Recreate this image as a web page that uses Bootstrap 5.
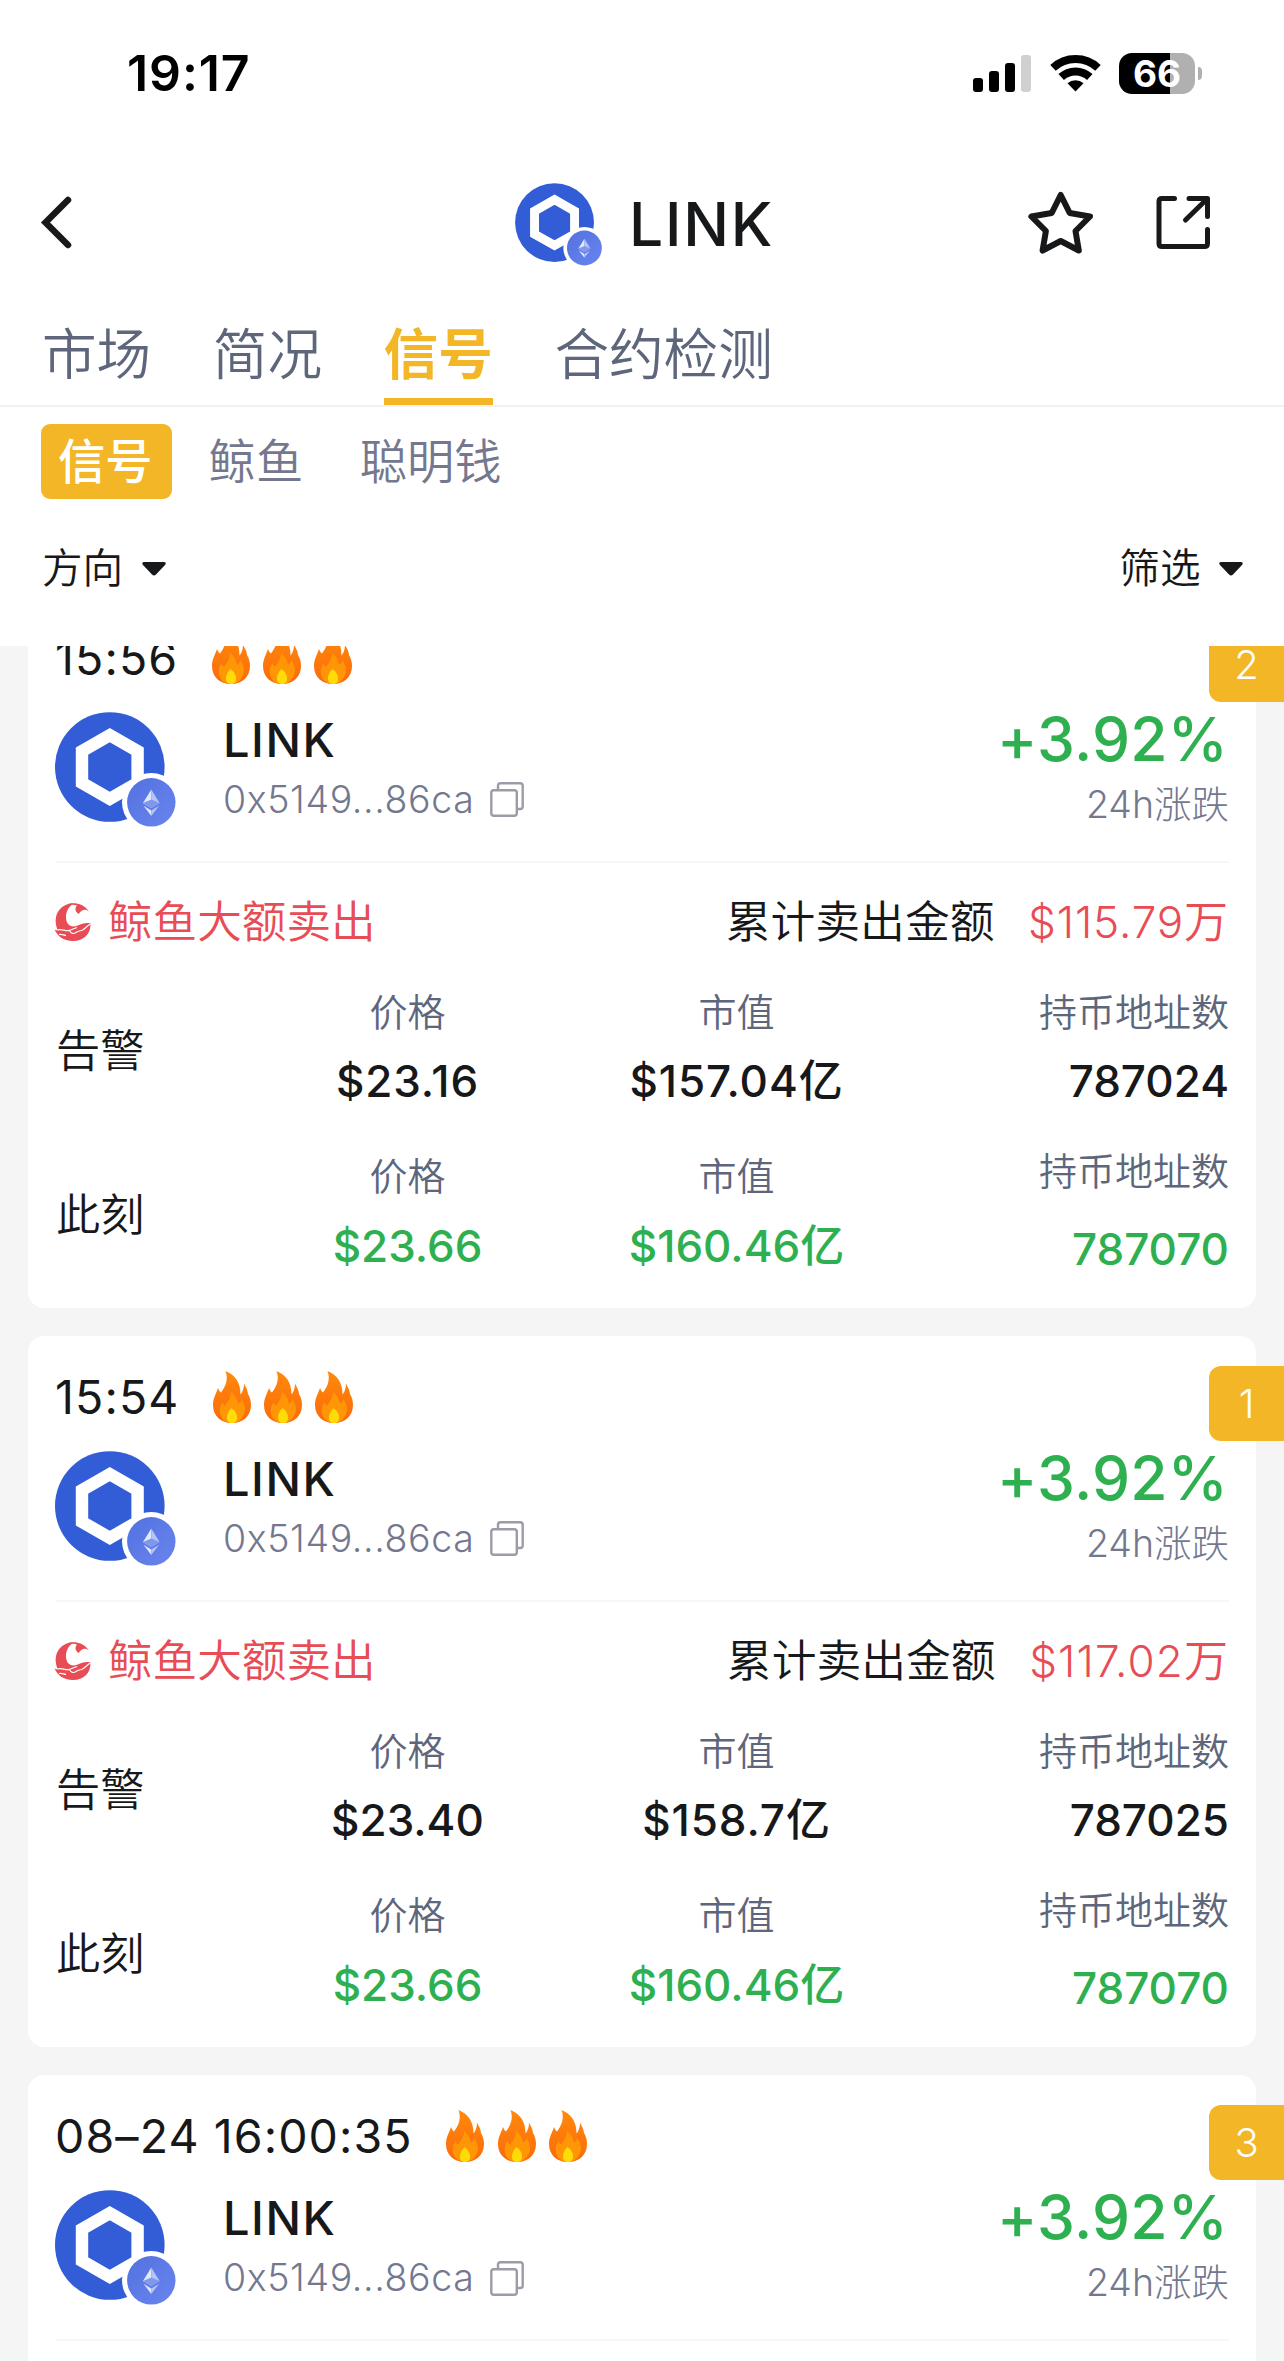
<!DOCTYPE html>
<html lang="zh-CN">
<head>
<meta charset="utf-8">
<meta name="viewport" content="width=device-width, initial-scale=1">
<title>LINK</title>
<link href="https://cdn.jsdelivr.net/npm/bootstrap@5.3.0/dist/css/bootstrap.min.css" rel="stylesheet">
<style>
  :root { --ink: #17181a; --slate: #5d667b; --mute: #74788f; --gold: #f2b626; --up: #2fb050; --down: #e84c55; }
  body { font-family: Inter, "Noto Sans CJK SC", sans-serif; font-weight: 350; line-height: 1; color: var(--ink); background: #fff; }
  .screen { width: 1284px; height: 2361px; overflow: hidden; }
  svg { display: block; flex: none; }
  .text-slate { color: var(--slate); }
  .text-mute { color: var(--mute); }
  .text-up { color: var(--up); }
  .text-down { color: var(--down); }

  .status-bar { height: 146px; padding: 0 82px 0 127px; color: #000; }
  .clock { font-size: 50px; font-weight: 600; letter-spacing: .9px; }
  .battery { width: 76px; height: 41px; border-radius: 13px; background: linear-gradient(90deg, #000 67%, #b0b0b0 67%); color: #fff; font-size: 37px; font-weight: 700; }
  .battery-tip { width: 4px; height: 13px; border-radius: 0 5px 5px 0; background: #b0b0b0; margin-left: 3px; }
  .wifi { margin: 0 18px 0 19px; }

  .title-bar { height: 153px; padding: 0 73px 0 40px; }
  .title-token { gap: 18px; margin-left: 182px; }
  .title-name { font-size: 60.5px; font-weight: 500; letter-spacing: 1.8px; line-height: 62px; padding-top: 2px; }
  .title-actions { gap: 61px; }

  .main-tabs { height: 108px; padding-left: 42px; gap: 61.6px; border-bottom: 2px solid #f1f1f2; }
  .main-tabs .nav-link { padding: 12px 0 0; height: 106px; line-height: 87px; font-size: 54.6px; color: var(--slate); }
  .main-tabs .nav-link.active { color: var(--gold); font-weight: 600; border-bottom: 7px solid var(--gold); }
  .sub-tabs { padding: 17px 41px 0; }
  .sub-tabs .nav-link { padding: 0; line-height: 75px; font-size: 47.3px; color: var(--mute); margin-right: 56.5px; }
  .sub-tabs .nav-link.active { background: var(--gold); color: #fff; font-weight: 500; padding: 0 19px 0 17px; border-radius: 9px; margin-right: 37px; }
  .filters { height: 147px; padding: 0 41px 7px 42px; font-size: 40.6px; }
  .filters > div { gap: 18.5px; }

  .feed { height: 1715px; background: #f5f5f5; padding: 0 28px; }
  .feed-list { gap: 28px; margin-top: -49px; }
  .signal-card { height: 711px; flex: none; border: 0; border-radius: 16px; padding: 30px 27px 0 28px; color: var(--ink); }
  .signal-time { height: 62px; font-size: 46.5px; font-weight: 400; letter-spacing: 1.1px; gap: 33.5px; margin-left: -1px; }
  .flames { gap: 13.3px; }
  .token-row { height: 174px; padding-top: 23px; border-bottom: 2px solid #f6f6f7; }
  .token-row .avatar { margin-left: -1px; margin-right: 46px; }
  .token-name { font-size: 47px; font-weight: 500; letter-spacing: 1.5px; line-height: 55px; }
  .token-addr { font-size: 37.5px; font-weight: 300; letter-spacing: .6px; line-height: 66px; gap: 16px; }
  .change { font-size: 60.5px; font-weight: 500; letter-spacing: .2px; line-height: 54px; margin-right: 1px; }
  .change-label { font-size: 37.5px; font-weight: 300; line-height: 78px; }
  .signal-row { height: 118px; font-size: 44.8px; padding-top: 1px; }
  .signal-row .event { gap: 17px; margin-left: -2px; font-size: 44.6px; }
  .signal-row .total { gap: 33.5px; }
  .amount { font-size: 44px; font-weight: 350; letter-spacing: .9px; }
  .wide { letter-spacing: 1.1px; }

  .metric-row { height: 164px; }
  .metric-head { width: 187px; font-size: 44.2px; line-height: 141px; }
  .metric-row.now .metric-head { line-height: 142px; }
  .metric { width: 329px; text-align: center; }
  .metric.last { width: auto; flex: 1; text-align: right; }
  .metric dt { font-size: 38px; font-weight: 350; line-height: 62px; color: var(--slate); }
  .metric dd { font-size: 44px; font-weight: 500; letter-spacing: .9px; line-height: 77px; margin: 0; }
  .metric-row.now dt { line-height: 64px; }
  .metric dd.tight { letter-spacing: 0; }
  .metric.last dd { letter-spacing: 0; }
  .metric-row.now .metric.shifted dt { line-height: 55px; }
  .metric.shifted dd { line-height: 101px; }
  .rank { right: -28px; top: 30px; width: 75px; height: 75px; border-radius: 12px 0 0 12px; background: var(--gold); color: #fff; font-size: 40px; font-weight: 300; }
</style>
<script src="https://cdn.jsdelivr.net/npm/bootstrap@5.3.0/dist/js/bootstrap.bundle.min.js"></script>
</head>
<body>
<svg width="0" height="0" class="position-absolute">
  <defs>
    <linearGradient id="flameFill" x1="0" y1="0" x2="0" y2="1"><stop offset="0" stop-color="#ff8a0c"/><stop offset="1" stop-color="#fb6a0a"/></linearGradient>
    <linearGradient id="ethFill" x1="0" y1="0" x2="1" y2="1"><stop offset="0" stop-color="#5272e0"/><stop offset="1" stop-color="#6a84ee"/></linearGradient>
  </defs>
  <symbol id="logo" viewBox="0 0 122 116">
    <circle cx="54.8" cy="55" r="54.8" fill="#325dd6"/>
    <path d="M54.8 23.2 82.6 39V71L54.8 86.8 27 71V39Z" fill="none" stroke="#fff" stroke-width="12.4"/>
    <circle cx="96.3" cy="90.3" r="29.3" fill="#fff"/>
    <circle cx="96.3" cy="90.3" r="24.2" fill="url(#ethFill)"/>
    <path d="M96.3 77.5 88 91l8.3 5Z" fill="#dfe8fd"/><path d="M96.3 77.5 104.600 91l-8.3 5Z" fill="#b3c4f8"/>
    <path d="M88 91l8.300-3.500 8.300 3.500-8.300 5Z" fill="#7f98ec"/>
    <path d="M88.500 93.700l7.800 4.800v5.500Z" fill="#dfe8fd"/><path d="M104.100 93.700l-7.800 4.800v5.500Z" fill="#b3c4f8"/>
  </symbol>
  <symbol id="flame" viewBox="0 0 38 52">
    <path d="M12.500 0C22 4 27.500 11 27.500 23.500 30 20.500 31 17 31 12.500 33 17 34.500 18 35 23 37 26 38 30 38 34 38 45 30 52 19 52S0 45 0 34C0 27 3 23 5 17 6 19 6.500 20.500 8 21.500 13 15 15.500 8 12.500 0Z" fill="url(#flameFill)"/>
    <path d="M18 21C23 25 24.500 29 25 33 27 31.500 28 30 28.500 28 32 34 33 38 31 43 28 49.500 24 52 19 52S8.500 49 7 43C6 38 7.500 34 9.500 31 10 33 10.500 34 12 34.500 15.500 30.500 18 26 18 21Z" fill="#ff9606"/>
    <path d="M18.500 37C22.500 40 24.500 43.500 24 47.500 23.500 51 21.500 52 19 52S14.500 51 14 47.500C13.700 43.500 15.500 40 18.500 37Z" fill="#ffdc08"/>
  </symbol>
  <symbol id="copy" viewBox="0 0 34 35">
    <g fill="none" stroke="#9b9ca8" stroke-width="2.400"><rect x="1.300" y="8.300" width="25.500" height="25.500" rx="2.500"/><path d="M8 8V3.800Q8 1.300 10.500 1.300H30.200Q32.700 1.300 32.700 3.800V24.500Q32.700 27 30.200 27H27"/></g>
  </symbol>
  <symbol id="whale" viewBox="0 0 37 38">
    <path d="M19.500.500C14.500 4 12 8.500 12 14 12 20 15 23.500 19.500 23.500 25.500 23 29 18.500 36.500 20.500 37 31 29.500 38 19 38 9 38 3.500 33 .500 26.500 1.500 27 2.500 27.500 3.500 27 2 23 1 18 2 14 4 5.500 11 0 19.500.500Z" fill="#e84c55"/>
    <path d="M13.500 1.200C19-.800 29-.500 35 8.500 31 5.500 28 6.500 24.500 11 20.500 8 21 5 23 2.600 20 1.600 17 1.500 13.500 1.200Z" fill="#e84c55"/>
    <path d="M3 27C8 25.500 11 28.500 15.500 27.500 17 31 20 31 22 29.500 24 28 25.500 28 27.500 27.500 31 26.500 33.500 22 36.500 21M5 31.500C8 31 9 32 12 32.500M15 27.500C18 26 21 25.500 23 24.500" fill="none" stroke="#fff" stroke-width="1.100"/>
  </symbol>
  <symbol id="caret" viewBox="0 0 24 14"><path d="M2 0H22Q25 .500 23 3L14 12.500Q12 14.500 10 12.500L1 3Q-1 .500 2 0Z" fill="#17181a"/></symbol>
</svg>

<div class="screen d-flex flex-column">
  <header class="status-bar d-flex justify-content-between align-items-center">
    <span class="clock">19:17</span>
    <div class="d-flex align-items-center">
      <svg width="58" height="37" viewBox="0 0 58 37"><rect y="23" width="10" height="14" rx="3"/><rect x="16" y="16" width="10" height="21" rx="3"/><rect x="32" y="8" width="10" height="29" rx="3"/><rect x="48" width="10" height="37" rx="3" fill="#d0d0d2"/></svg>
      <svg class="wifi" width="51" height="38" viewBox="0 0 51 38"><g fill="none" stroke="#000" stroke-width="8"><path d="M3 13.900A33 33 0 0 1 48 13.900"/><path d="M11.200 23A21 21 0 0 1 39.800 23"/></g><path d="M17.500 29.200A12 12 0 0 1 33.500 29.200L25.500 37.500Z"/></svg>
      <div class="battery d-flex align-items-center justify-content-center">66</div>
      <div class="battery-tip"></div>
    </div>
  </header>

  <div class="title-bar d-flex align-items-center justify-content-between">
    <svg width="32" height="53" viewBox="0 0 32 53"><path d="M28 4 5.500 26.500 28 49" fill="none" stroke="#17181a" stroke-width="6.500" stroke-linecap="round"/></svg>
    <div class="title-token d-flex align-items-center ps-2">
      <svg class="mt-1" width="88" height="83.500"><use href="#logo"/></svg>
      <span class="title-name ps-2">LINK</span>
    </div>
    <div class="title-actions d-flex align-items-center">
      <svg width="68" height="66" viewBox="0 0 68 66"><path d="M33.700 5 42.700 23 63 26.500 48.500 41 51.800 60.500 33.700 51 15.600 60.500 18.900 41 4.400 26.500 24.700 23Z" fill="none" stroke="#17181a" stroke-width="6" stroke-linejoin="round"/></svg>
      <svg width="55" height="55" viewBox="0 0 55 55"><g fill="none" stroke="#17181a" stroke-width="5" stroke-linecap="round" stroke-linejoin="round"><path d="M18.500 3.500H6Q3 3.500 3 6.500V48.500Q3 51.500 6 51.500H48.500Q51.500 51.500 51.500 48.500V34.500"/><path d="M33 3.500H51.500V21.500M51 4 29.500 25"/></g></svg>
    </div>
  </div>

  <nav class="main-tabs nav flex-nowrap">
    <a class="nav-link">市场</a><a class="nav-link">简况</a><a class="nav-link active">信号</a><a class="nav-link">合约检测</a>
  </nav>
  <nav class="sub-tabs nav flex-nowrap">
    <a class="nav-link active">信号</a><a class="nav-link">鲸鱼</a><a class="nav-link">聪明钱</a>
  </nav>
  <div class="filters d-flex justify-content-between align-items-center">
    <div class="d-flex align-items-center">方向<svg width="24" height="14"><use href="#caret"/></svg></div>
    <div class="d-flex align-items-center">筛选<svg width="24" height="14"><use href="#caret"/></svg></div>
  </div>

  <main class="feed overflow-hidden">
    <div class="feed-list d-flex flex-column">

      <article class="signal-card card">
        <span class="rank position-absolute d-flex align-items-center justify-content-center">2</span>
        <div class="signal-time d-flex align-items-center">15:56
          <span class="flames d-flex"><svg width="38" height="52"><use href="#flame"/></svg><svg width="38" height="52"><use href="#flame"/></svg><svg width="38" height="52"><use href="#flame"/></svg></span>
        </div>
        <div class="token-row d-flex">
          <svg class="avatar" width="122" height="116"><use href="#logo"/></svg>
          <div class="flex-grow-1">
            <div class="token-name">LINK</div>
            <div class="token-addr d-flex align-items-center text-mute">0x5149...86ca<svg width="34" height="35"><use href="#copy"/></svg></div>
          </div>
          <div class="text-end"><div class="change text-up">+3.92%</div><div class="change-label text-mute">24h涨跌</div></div>
        </div>
        <div class="signal-row d-flex justify-content-between align-items-center">
          <div class="event d-flex align-items-center text-down"><svg width="37" height="38"><use href="#whale"/></svg>鲸鱼大额卖出</div>
          <div class="total d-flex align-items-center">累计卖出金额<span class="amount text-down">$115.79万</span></div>
        </div>
        <div class="metric-row d-flex">
          <div class="metric-head">告警</div>
          <dl class="metric mb-0"><dt>价格</dt><dd>$23.16</dd></dl>
          <dl class="metric mb-0"><dt>市值</dt><dd>$157.04亿</dd></dl>
          <dl class="metric last mb-0"><dt>持币地址数</dt><dd>787024</dd></dl>
        </div>
        <div class="metric-row now d-flex">
          <div class="metric-head">此刻</div>
          <dl class="metric mb-0"><dt>价格</dt><dd class="text-up tight">$23.66</dd></dl>
          <dl class="metric mb-0"><dt>市值</dt><dd class="text-up tight">$160.46亿</dd></dl>
          <dl class="metric last shifted mb-0"><dt>持币地址数</dt><dd class="text-up">787070</dd></dl>
        </div>
      </article>

      <article class="signal-card card">
        <span class="rank position-absolute d-flex align-items-center justify-content-center">1</span>
        <div class="signal-time d-flex align-items-center">15:54
          <span class="flames d-flex"><svg width="38" height="52"><use href="#flame"/></svg><svg width="38" height="52"><use href="#flame"/></svg><svg width="38" height="52"><use href="#flame"/></svg></span>
        </div>
        <div class="token-row d-flex">
          <svg class="avatar" width="122" height="116"><use href="#logo"/></svg>
          <div class="flex-grow-1">
            <div class="token-name">LINK</div>
            <div class="token-addr d-flex align-items-center text-mute">0x5149...86ca<svg width="34" height="35"><use href="#copy"/></svg></div>
          </div>
          <div class="text-end"><div class="change text-up">+3.92%</div><div class="change-label text-mute">24h涨跌</div></div>
        </div>
        <div class="signal-row d-flex justify-content-between align-items-center">
          <div class="event d-flex align-items-center text-down"><svg width="37" height="38"><use href="#whale"/></svg>鲸鱼大额卖出</div>
          <div class="total d-flex align-items-center">累计卖出金额<span class="amount wide text-down">$117.02万</span></div>
        </div>
        <div class="metric-row d-flex">
          <div class="metric-head">告警</div>
          <dl class="metric mb-0"><dt>价格</dt><dd class="tight">$23.40</dd></dl>
          <dl class="metric mb-0"><dt>市值</dt><dd>$158.7亿</dd></dl>
          <dl class="metric last mb-0"><dt>持币地址数</dt><dd>787025</dd></dl>
        </div>
        <div class="metric-row now d-flex">
          <div class="metric-head">此刻</div>
          <dl class="metric mb-0"><dt>价格</dt><dd class="text-up tight">$23.66</dd></dl>
          <dl class="metric mb-0"><dt>市值</dt><dd class="text-up tight">$160.46亿</dd></dl>
          <dl class="metric last shifted mb-0"><dt>持币地址数</dt><dd class="text-up">787070</dd></dl>
        </div>
      </article>

      <article class="signal-card card">
        <span class="rank position-absolute d-flex align-items-center justify-content-center">3</span>
        <div class="signal-time d-flex align-items-center">08–24 16:00:35
          <span class="flames d-flex"><svg width="38" height="52"><use href="#flame"/></svg><svg width="38" height="52"><use href="#flame"/></svg><svg width="38" height="52"><use href="#flame"/></svg></span>
        </div>
        <div class="token-row d-flex">
          <svg class="avatar" width="122" height="116"><use href="#logo"/></svg>
          <div class="flex-grow-1">
            <div class="token-name">LINK</div>
            <div class="token-addr d-flex align-items-center text-mute">0x5149...86ca<svg width="34" height="35"><use href="#copy"/></svg></div>
          </div>
          <div class="text-end"><div class="change text-up">+3.92%</div><div class="change-label text-mute">24h涨跌</div></div>
        </div>
      </article>

    </div>
  </main>
</div>
</body>
</html>
